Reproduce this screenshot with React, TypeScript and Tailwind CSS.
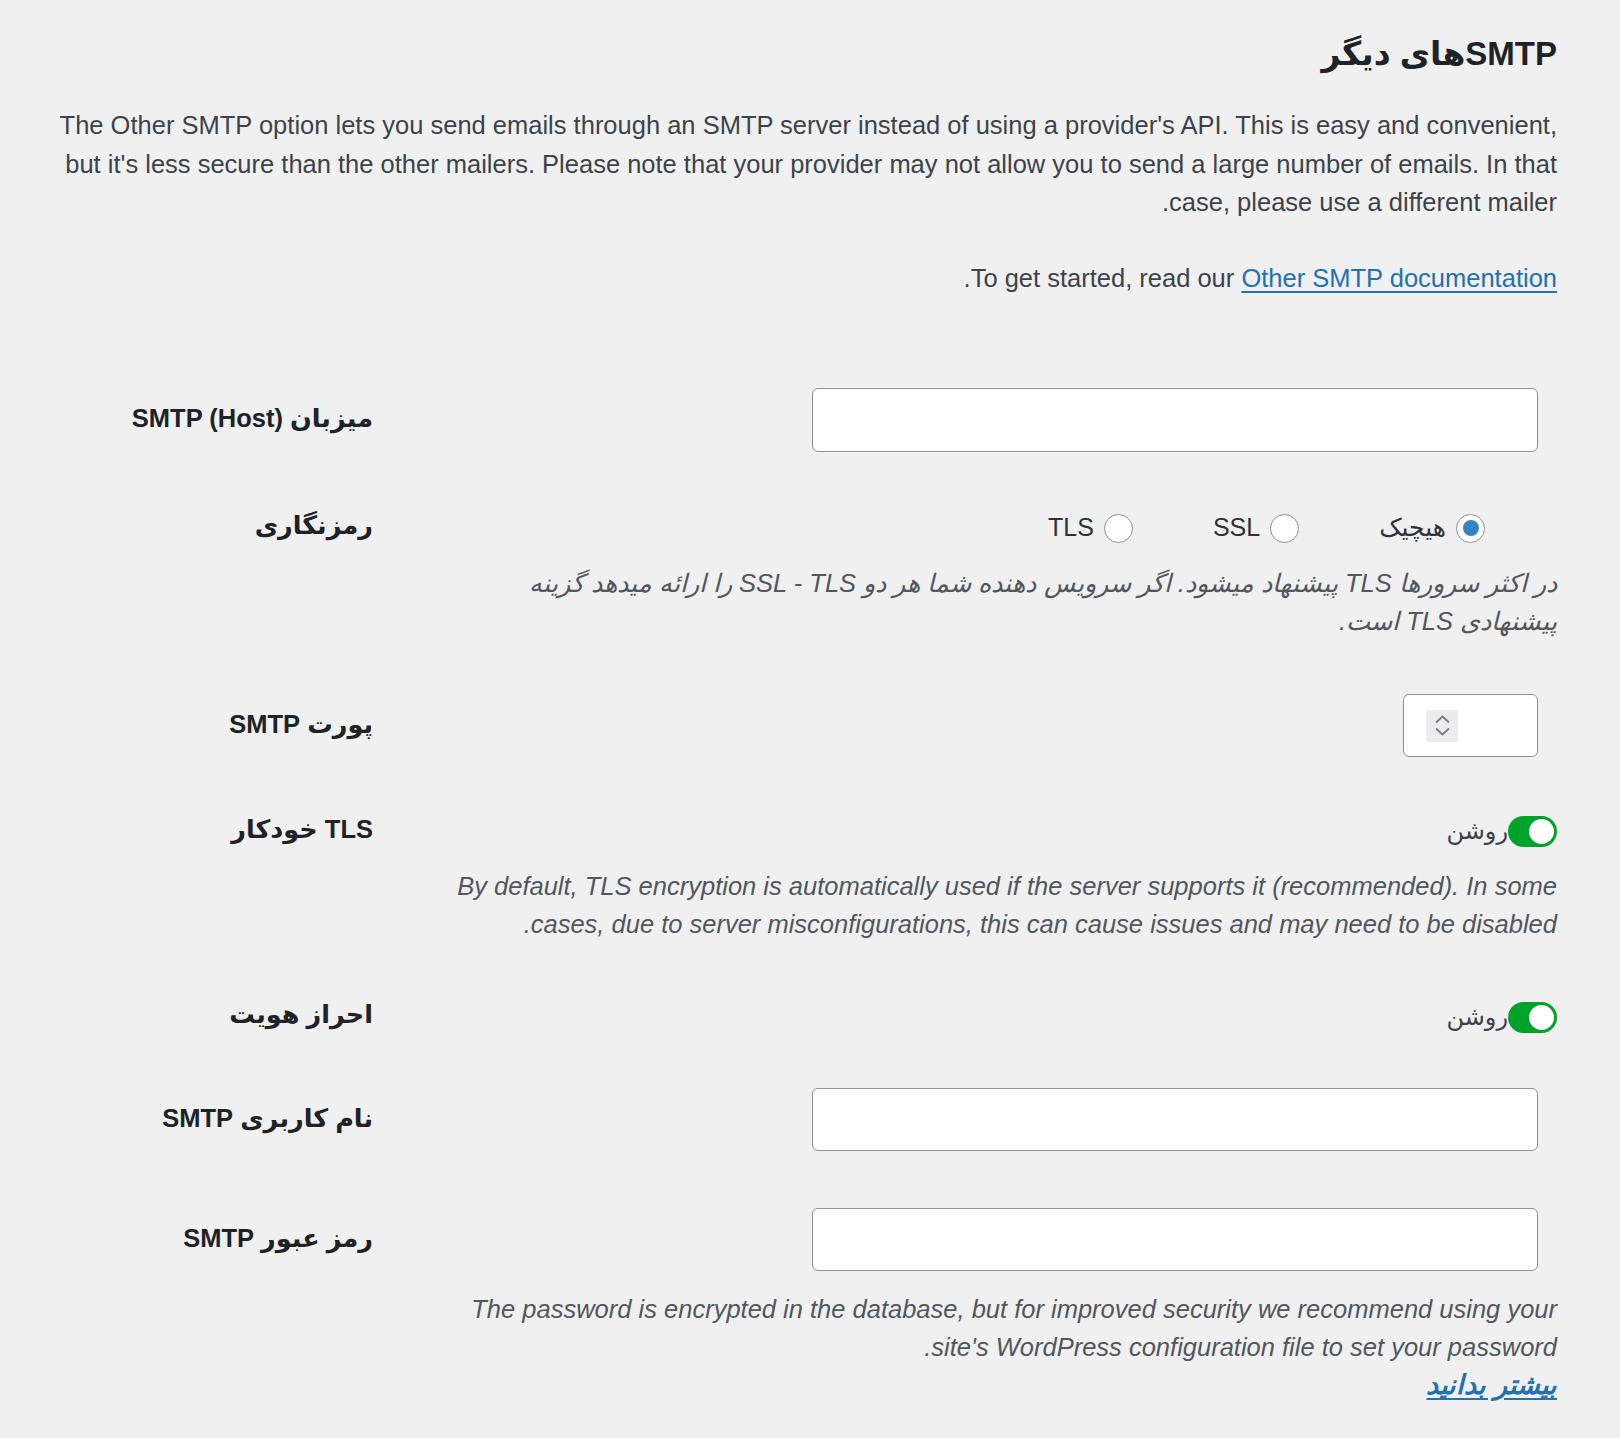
import React from "react";

function Line({ children }: { children: React.ReactNode }) {
  return <span className="whitespace-nowrap">{children}</span>;
}

function Row({
  label,
  labelClass = "pt-[11px]",
  className = "",
  children,
}: {
  label: string;
  labelClass?: string;
  className?: string;
  children: React.ReactNode;
}) {
  return (
    <div className={`grid grid-cols-[319px_1fr] gap-x-[70px] ${className}`}>
      <div
        dir="rtl"
        className={`text-right text-[25.5px] leading-[38px] font-bold text-[#1d2327] ${labelClass}`}
      >
        {label}
      </div>
      <div dir="rtl">{children}</div>
    </div>
  );
}

function Radio({ label, checked = false }: { label: string; checked?: boolean }) {
  return (
    <label className="flex items-center gap-[10px]">
      <span className="flex h-[29px] w-[29px] items-center justify-center rounded-full border border-[#8c8f94] bg-white">
        {checked && <span className="h-[16px] w-[16px] rounded-full bg-[#3582c4]" />}
      </span>
      <span className="text-[25px] text-[#2c3338]">{label}</span>
    </label>
  );
}

function Toggle() {
  return (
    <div className="flex h-[38px] items-center">
      <span dir="ltr" className="flex h-[31px] w-[49px] items-center justify-end rounded-full bg-[#00a32a] pr-[3px]">
        <span className="h-[25px] w-[25px] rounded-full bg-white" />
      </span>
      <span className="text-[24px] text-[#3c434a]">روشن</span>
    </div>
  );
}

const desc = "text-[25.5px] leading-[38px] italic text-[#50575e]";

export default function App() {
  return (
    <div className="min-h-[1438px] bg-[#f0f0f1] pl-[54px] pr-[63px] pt-[34px] pb-[30px] font-['Liberation_Sans','DejaVu_Sans',sans-serif] text-[#3c434a]">
      <h2 dir="rtl" className="text-[33px] leading-[40px] font-bold text-[#1d2327]">
        SMTPهای دیگر
      </h2>

      <p dir="rtl" className="mt-[32px] text-[25.5px] leading-[38.5px]">
        <Line>
          The Other SMTP option lets you send emails through an SMTP server instead of using a provider's API. This is easy and convenient,
        </Line>{" "}
        <Line>
          but it's less secure than the other mailers. Please note that your provider may not allow you to send a large number of emails. In that
        </Line>{" "}
        <Line>case, please use a different mailer.</Line>
      </p>

      <p dir="rtl" className="mt-[37px] text-[25.5px] leading-[38.5px]">
        To get started, read our{" "}
        <a href="#" className="text-[#2271b1] underline underline-offset-[4px]">
          Other SMTP documentation
        </a>
        .
      </p>

      <div className="mt-[91px]">
        <Row label="میزبان SMTP (Host)">
          <input className="mr-[19px] block h-[64px] w-[726px] rounded-[6px] border border-[#8c8f94] bg-white" />
        </Row>

        <Row label="رمزنگاری" labelClass="-mt-[3px]" className="mt-[57px]">
          <div className="flex h-[38px] items-center gap-[80px] pr-[72px]">
            <Radio label="هیچیک" checked />
            <Radio label="SSL" />
            <Radio label="TLS" />
          </div>
          <p className={`mt-[17px] ${desc}`}>
            <Line>در اکثر سرورها TLS پیشنهاد میشود. اگر سرویس دهنده شما هر دو SSL - TLS را ارائه میدهد گزینه</Line>{" "}
            <Line>پیشنهادی TLS است.</Line>
          </p>
        </Row>

        <Row label="پورت SMTP" className="mt-[54px]">
          <div className="mr-[19px] h-[63px] w-[135px] rounded-[6px] border border-[#8c8f94] bg-white">
            <div dir="ltr" className="flex h-full items-center pl-[22px]">
              <div className="flex h-[32px] w-[32px] flex-col items-center justify-center gap-[5px] rounded-[2px] bg-[#ececee]">
                <svg width="15" height="8" viewBox="0 0 15 8" fill="none">
                  <path d="M1.5 7 L7.5 1.5 L13.5 7" stroke="#7a7d82" strokeWidth="1.8" strokeLinecap="round" strokeLinejoin="round" />
                </svg>
                <svg width="15" height="8" viewBox="0 0 15 8" fill="none">
                  <path d="M1.5 1 L7.5 6.5 L13.5 1" stroke="#7a7d82" strokeWidth="1.8" strokeLinecap="round" strokeLinejoin="round" />
                </svg>
              </div>
            </div>
          </div>
        </Row>

        <Row label="TLS خودکار" labelClass="-mt-[2px]" className="mt-[55px]">
          <Toggle />
          <p className={`mt-[17px] ${desc}`}>
            <Line>
              By default, TLS encryption is automatically used if the server supports it (recommended). In some
            </Line>{" "}
            <Line>cases, due to server misconfigurations, this can cause issues and may need to be disabled.</Line>
          </p>
        </Row>

        <Row label="احراز هویت" labelClass="-mt-[3px]" className="mt-[55px]">
          <Toggle />
        </Row>

        <Row label="نام کاربری SMTP" className="mt-[52px]">
          <input className="mr-[19px] block h-[63px] w-[726px] rounded-[6px] border border-[#8c8f94] bg-white" />
        </Row>

        <Row label="رمز عبور SMTP" className="mt-[57px]">
          <input
            type="password"
            className="mr-[19px] block h-[63px] w-[726px] rounded-[6px] border border-[#8c8f94] bg-white"
          />
          <p className={`mt-[19px] ${desc}`}>
            <Line>
              The password is encrypted in the database, but for improved security we recommend using your
            </Line>{" "}
            <Line>site's WordPress configuration file to set your password.</Line>
            <br />
            <a href="#" className="text-[27px] font-bold text-[#2271b1] underline underline-offset-[4px]">
              بیشتر بدانید
            </a>
          </p>
        </Row>
      </div>
    </div>
  );
}
